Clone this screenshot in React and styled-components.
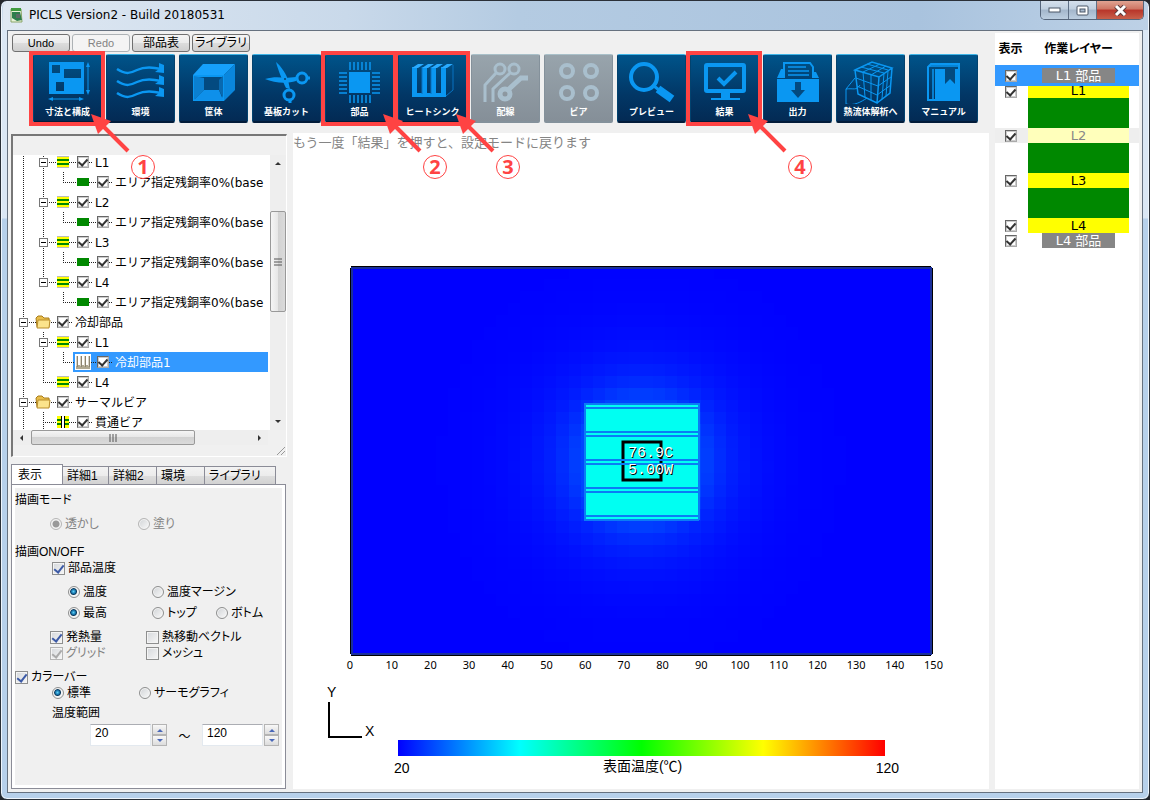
import React from 'react';
import styled, { createGlobalStyle, css } from 'styled-components';

const FRAME = '#b7d0ea';
const FACE = '#f0f0f0';
const RED = '#ff4343';
const SELECT = '#3399ff';
const BOARD_GREEN = '#008800';
const YELLOW = '#ffff00';

const UI_FONT = '"DejaVu Sans", "Noto Sans CJK JP", sans-serif';
const GOTHIC = '"Liberation Sans", "Noto Sans CJK JP", sans-serif';

const GlobalStyle = createGlobalStyle`
  * {
    box-sizing: border-box;
  }

  body {
    margin: 0;
    background: #23262b;
    color: #000;
    font-family: ${UI_FONT};
    font-size: 12px;
  }

  button, input {
    margin: 0;
    padding: 0;
    font-family: inherit;
    font-size: inherit;
  }
`;

/* ---------- window frame ---------- */

const Window = styled.div`
  display: flex;
  flex-direction: column;
  min-height: 100vh;
  padding: 0 6px 6px;
  border: 1px solid #2b3038;
  border-radius: 7px;
  background: linear-gradient(#c3d5e8 0, #dbe7f4 30px, #dbe7f4 217px, ${FRAME} 218px);
  box-shadow: inset 0 0 0 1px #eef5fc;
`;

const TitleBar = styled.header`
  display: flex;
  justify-content: space-between;
  height: 29px;
  margin: 0 -5px 0 -4px;
  padding: 0 4px 0 7px;
  border-radius: 6px 6px 0 0;
  background: linear-gradient(90deg, #dfe8f2, #c9d9ea 30%, #b4cbe2 45%, #a9c3de 80%, #bdd1e6);
`;

const Title = styled.h1`
  display: flex;
  align-items: center;
  gap: 6px;
  margin: 0;
  padding-bottom: 2px;
  font-size: 12px;
  font-weight: 400;
  line-height: 16px;
`;

const WindowButtons = styled.div`
  display: flex;
  height: 19px;
  border: 1px solid #55657a;
  border-top: 0;
  border-radius: 0 0 5px 5px;
  overflow: hidden;
`;

const WindowButton = styled.button`
  display: flex;
  align-items: center;
  justify-content: center;
  width: ${({ $close }) => ($close ? 46 : 28)}px;
  border: 0;
  border-right: ${({ $close }) => ($close ? 0 : '1px solid #5f7086')};
  background: ${({ $close }) =>
    $close
      ? 'linear-gradient(#e0a392, #cd7563 45%, #b8352a 50%, #c8604a)'
      : 'linear-gradient(#d5e0ec, #c0cfdf 45%, #a3b6cb 50%, #bccee0)'};
`;

const Client = styled.div`
  display: flex;
  flex: 1;
  gap: 6px;
  padding: 2px 3px 3px 0;
  border: 1px solid #66717f;
  background: ${FACE};
`;

const Main = styled.main`
  display: flex;
  flex: 1;
  flex-direction: column;
  min-width: 0;
`;

/* ---------- toolbar ---------- */

const MenuRow = styled.div`
  display: flex;
  gap: 2px;
  padding: 1px 4px 2px;
`;

const MenuButton = styled.button`
  width: 58px;
  height: 18px;
  border: 1px solid #707070;
  border-radius: 3px;
  background: linear-gradient(#f4f4f4, #ebebeb 50%, #dddddd 50%, #cfcfcf);
  font-family: ${GOTHIC};
  font-size: ${({ $latin }) => ($latin ? 11 : 12)}px;
  font-feature-settings: 'palt';
  line-height: 16px;
  white-space: nowrap;

  &:disabled {
    border-color: #adb2b5;
    background: #f4f4f4;
    color: #838383;
  }
`;

const IconBar = styled.nav`
  display: flex;
  gap: 4px;
  padding: 0 0 10px 25px;
`;

const TileWrap = styled.div`
  position: relative;
`;

const Tile = styled.button`
  display: block;
  width: 69px;
  height: 69px;
  border: 1px solid #02426e;
  border-top-color: #3fb4e6;
  border-bottom: 2px solid #021c3a;
  border-radius: 2px;
  background: linear-gradient(#00548a, #023766 60%, #032a54);
  color: #fff;

  svg {
    display: block;
    width: 67px;
    height: 48px;
  }

  &:disabled {
    border-color: #84919b;
    border-top-color: #a9c0c9;
    background: linear-gradient(#98a4ac, #858f98);
  }
`;

const TileLabel = styled.span`
  display: block;
  font-family: "Noto Sans CJK JP", sans-serif;
  font-size: 9px;
  font-weight: 700;
  line-height: 16px;
  white-space: nowrap;
`;

const Highlight = styled.div`
  position: absolute;
  inset: -3px -3px -3px -4px;
  border: 4px solid ${RED};
  pointer-events: none;
`;

const Callout = styled.div`
  position: absolute;
  z-index: 2;
  top: 59px;
  left: 57px;
  pointer-events: none;

  svg {
    display: block;
  }
`;

const CalloutNumber = styled.span`
  position: absolute;
  top: 42px;
  left: 41px;
  width: 24px;
  height: 24px;
  border: 1px solid ${RED};
  border-radius: 50%;
  color: ${RED};
  font-family: "Noto Sans", sans-serif;
  font-size: 20px;
  font-weight: 700;
  line-height: 22px;
  text-align: center;
`;

const svgBlue = '#0a97f2';
const svgGray = '#a9bfcd';

const icons = {
  size: (
    <>
      <path fillRule="evenodd" d="M16 7h35v32H16zM19 10v8h8v-8zM31 14v9h17v-9zM23 27v9h8v-9z" fill={svgBlue} />
      <path d="M55 11v25M19 44h29" stroke={svgBlue} strokeWidth="1" />
      <path d="M55 7l2 5h-4zM55 40l2-5h-4zM15 44l5-2v4zM51 44l-5-2v4z" fill={svgBlue} />
    </>
  ),
  wind: [0, 12, 24].map(dy => (
    <g key={dy} transform={`translate(0 ${dy})`}>
      <path d="M11 14c9 6 14 4 20 1s12-4 24-1" fill="none" stroke={svgBlue} strokeWidth="2.500" />
      <path d="M53 8l5 2v8l-9-1 4-3z" fill={svgBlue} />
    </g>
  )),
  box: (
    <>
      <path d="M14 20L24 9h32l-11 11z" fill="#16a0fb" />
      <path d="M45 20L56 9v26L45 46z" fill="#0a86dc" />
      <path d="M15 21h29v24H15z" fill="#034a80" stroke={svgBlue} strokeWidth="2" />
      <path d="M15 21l10 2v12L15 45z" fill="#0b7fd0" />
      <path d="M15 45l10-10h15l4 10z" fill="#0e90ea" />
      <path d="M44 21l-4 4v10l4 8z" fill="#0869b0" />
    </>
  ),
  scissors: (
    <>
      <path d="M24 7c5 4 11 13 12 18l2 9-4-1c-3-6-8-18-10-26z" fill={svgBlue} />
      <path d="M13 24c7-2 14-2 20-1l11-1v4c-9 3-22 2-31-2z" fill={svgBlue} />
      <circle cx="50" cy="23" r="5" fill="none" stroke={svgBlue} strokeWidth="3" />
      <circle cx="37" cy="40" r="5" fill="none" stroke={svgBlue} strokeWidth="3" />
      <path d="M54 23h4M38 45v3" stroke={svgBlue} strokeWidth="3" />
      <circle cx="33" cy="24" r="1" fill="#023e6c" />
    </>
  ),
  chip: (
    <>
      <path d="M24 17h21v21H24z" fill={svgBlue} />
      <path
        d="M25 7v8M29 7v8M33 7v8M37 7v8M41 7v8M45 7v8M25 40v8M29 40v8M33 40v8M37 40v8M41 40v8M45 40v8M14 18h8M14 22h8M14 26h8M14 30h8M14 34h8M14 38h8M47 18h8M47 22h8M47 26h8M47 30h8M47 34h8M47 38h8"
        stroke={svgBlue}
        strokeWidth="1.500"
      />
    </>
  ),
  sink: (
    <>
      <path d="M14 38h34v4H14z" fill={svgBlue} />
      {[14, 24, 33, 43].map(x => (
        <g key={x}>
          <path d={`M${x} 12h5v28h-5z`} fill={svgBlue} />
          <path d={`M${x} 13l6-4h6l-6 4z`} fill="#2aabff" />
        </g>
      ))}
      {[24, 33].map(x => (
        <path key={x} d={`M${x} 12v27`} stroke="#0873c2" />
      ))}
      <path d="M48 41l7-6V10" fill="none" stroke="#0873c2" />
    </>
  ),
  wiring: (
    <g fill="none" stroke={svgGray} strokeWidth="3">
      <circle cx="29" cy="14" r="5" />
      <circle cx="43" cy="14" r="5" />
      <path d="M25 18L14 30v17M39 18L22 34v13" />
      <circle cx="34" cy="39" r="5" strokeWidth="5" />
      <path d="M38 34l12-11h7" strokeWidth="5" />
    </g>
  ),
  via: (
    <g fill="none" stroke={svgGray} strokeWidth="4">
      <circle cx="23" cy="16" r="6" />
      <circle cx="47" cy="16" r="6" />
      <circle cx="23" cy="38" r="6" />
      <circle cx="47" cy="38" r="6" />
    </g>
  ),
  preview: (
    <g fill="none" stroke={svgBlue}>
      <circle cx="27" cy="22" r="13" strokeWidth="4" />
      <path d="M37 31l5 4" strokeWidth="3" />
      <path d="M41 34l14 10" strokeWidth="8" />
    </g>
  ),
  result: (
    <>
      <rect x="16" y="10" width="38" height="26" rx="1" fill="none" stroke={svgBlue} strokeWidth="4" />
      <path d="M28 23l6 6 12-12" fill="none" stroke={svgBlue} strokeWidth="4" />
      <path d="M31 37h9v6h10v2H21v-2h10z" fill={svgBlue} />
    </>
  ),
  output: (
    <>
      <path d="M14 24h42v23H14z" fill={svgBlue} />
      <path d="M14 23l4-9h3v9zM56 23l-3-6h-2v6z" fill={svgBlue} />
      <path d="M21 23V8h26l3 4v11" fill="none" stroke={svgBlue} strokeWidth="2" />
      <path d="M25 12h18M25 16h21M25 20h21" stroke={svgBlue} strokeWidth="1.500" />
      <path d="M32 27h6v8h4l-7 8-7-8h4z" fill="#034a80" />
    </>
  ),
  cube: (
    <g fill="none" stroke={svgBlue}>
      <path d="M19 15L36 7l20 6-13 9zM19 15l3 24 19 9 2-26M56 13l-2 25-13 10" strokeWidth="1.500" />
      <path d="M27 17l17-8M35 20l15-9M25 12l23 6M31 9l21 6M20 23l22 8 13-9M21 31l20 9 14-10M27 17l2 25M35 20v25M48 18l-2 26M52 16l-2 25" />
      <path d="M19 23L10 34v15c8 2 15-2 21-6M10 34c8-1 10 2 14-4" strokeWidth="1" />
    </g>
  ),
  manual: (
    <>
      <path d="M19 12l3-3h28v36H19z" fill="none" stroke={svgBlue} strokeWidth="2" />
      <path d="M20 11h30M24 14v31" stroke={svgBlue} strokeWidth="1.500" />
      <path d="M26 14h24v31H26z" fill={svgBlue} />
      <path d="M36 13h10v16l-5-5-5 5z" fill="#034a80" />
    </>
  ),
};

const tiles = [
  { icon: 'size', label: '寸法と構成', step: 1 },
  { icon: 'wind', label: '環境' },
  { icon: 'box', label: '筐体' },
  { icon: 'scissors', label: '基板カット' },
  { icon: 'chip', label: '部品', step: 2 },
  { icon: 'sink', label: 'ヒートシンク', step: 3 },
  { icon: 'wiring', label: '配線', disabled: true },
  { icon: 'via', label: 'ビア', disabled: true },
  { icon: 'preview', label: 'プレビュー' },
  { icon: 'result', label: '結果', step: 4 },
  { icon: 'output', label: '出力' },
  { icon: 'cube', label: '熱流体解析へ' },
  { icon: 'manual', label: 'マニュアル' },
];

const ToolTile = ({ icon, label, step, disabled }) => (
  <TileWrap>
    <Tile disabled={disabled}>
      <svg viewBox="1 1 67 48" aria-hidden="true">
        {icons[icon]}
      </svg>
      <TileLabel>{label}</TileLabel>
    </Tile>
    {step && (
      <>
        <Highlight />
        <Callout>
          <svg width="42" height="42" aria-hidden="true">
            <path d="M14 14l24 24" stroke={RED} strokeWidth="4" />
            <path d="M1 1l20 7L8 21z" fill={RED} />
          </svg>
          <CalloutNumber>{step}</CalloutNumber>
        </Callout>
      </>
    )}
  </TileWrap>
);

/* ---------- tree ---------- */

const Body = styled.div`
  display: flex;
  flex: 1;
  gap: 6px;
  padding-left: 3px;
`;

const SideBar = styled.aside`
  display: flex;
  flex: 0 0 276px;
  flex-direction: column;
  min-width: 0;
`;

const TreePanel = styled.section`
  margin-top: 1px;
  border: solid #777;
  border-width: 2px 1px 1px 2px;
  border-right-color: #fff;
  border-bottom-color: #fff;
`;

const TreeHeader = styled.div`
  height: 19px;
`;

const TreeView = styled.div`
  display: grid;
  grid-template-columns: minmax(0, 1fr) 16px;
  grid-template-rows: 275px 15px;
`;

const TreeList = styled.ul`
  margin: 0;
  padding: 0 2px 0 0;
  overflow: hidden;
  background: #fff;
  list-style: none;

  li:first-child {
    margin-top: -3px;
  }
`;

const TreeRow = styled.li`
  display: flex;
  height: 20px;
`;

const dotsV = 'repeating-linear-gradient(#222 0 1px, transparent 1px 2px)';
const dotsH = 'repeating-linear-gradient(90deg, #222 0 1px, transparent 1px 2px)';

const guides = {
  blank: 'none',
  line: `${dotsV} 10px 0 / 1px 100% no-repeat`,
  elbow: `${dotsV} 10px 0 / 1px 50% no-repeat, ${dotsH} 100% 10px / 10px 1px no-repeat`,
  tee: `${dotsV} 10px 0 / 1px 100% no-repeat, ${dotsH} 100% 10px / 10px 1px no-repeat`,
  through: `${dotsH} 0 10px / 100% 1px no-repeat`,
};

const Cell = styled.span`
  display: flex;
  flex: 0 0 20px;
  align-items: center;
  justify-content: center;
  height: 20px;
  background: ${({ $guide }) => guides[$guide]};
`;

const Expander = styled.button`
  width: 9px;
  height: 9px;
  border: 1px solid #777;
  background: linear-gradient(#000, #000) center / 5px 1px no-repeat #fff;
`;

const TreeLabel = styled.label`
  display: flex;
  flex: 1;
  min-width: 0;
  line-height: 20px;
  white-space: nowrap;
  ${({ $selected }) =>
    $selected &&
    css`
      background: ${SELECT};
      color: #fff;
    `}
`;

const TreeText = styled.span`
  padding: 1px 0 0 2px;
`;

const TreeCheck = styled.input.attrs({ type: 'checkbox' })`
  display: grid;
  place-items: center;
  width: 12px;
  height: 12px;
  border: 1px solid #aaa;
  border-top-color: #666;
  border-left-color: #666;
  background: #fff;
  box-shadow: inset 0 0 0 1px #ccc;
  appearance: none;

  &:checked::before {
    width: 4px;
    height: 7px;
    margin-bottom: 3px;
    border: solid #333;
    border-width: 0 2px 2px 0;
    content: '';
    transform: rotate(42deg);
  }
`;

const nodeIcons = {
  folder: (
    <svg width="16" height="14" aria-hidden="true">
      <path d="M1 3l2-2h4l2 2h5v9H2z" fill="#e8bd4a" stroke="#a87d1c" />
      <path d="M3 5h12l-1 8H2z" fill="#fbe38c" stroke="#b98c2a" />
    </svg>
  ),
  layer: (
    <svg width="12" height="12" aria-hidden="true">
      <path d="M0 0h12v12H0z" fill={YELLOW} />
      <path d="M0 3h12v2H0zM0 7h12v2H0z" fill={BOARD_GREEN} />
      <path d="M0 0h12v1H0zM0 11h12v1H0z" fill="#bbb" />
    </svg>
  ),
  area: (
    <svg width="12" height="8" aria-hidden="true">
      <path d="M0 0h12v8H0z" fill={BOARD_GREEN} />
    </svg>
  ),
  fins: (
    <svg width="16" height="16" aria-hidden="true">
      <path d="M0 0h16v16H0z" fill="#fff" />
      <path d="M1 11h14v4H1z" fill="#b0a891" />
      <path d="M2.500 2v11M6.500 2v11M10.500 2v11M14.500 2v11" stroke="#8a8270" />
      <path d="M1.500 2v10M5.500 2v10M9.500 2v10M13.500 2v10" stroke="#d8d2c2" />
    </svg>
  ),
  through: (
    <svg width="12" height="12" aria-hidden="true">
      <path d="M0 0h12v12H0z" fill={YELLOW} />
      <path d="M0 3h12v2H0zM0 7h12v2H0z" fill={BOARD_GREEN} />
      <path d="M4 0h4v12H4z" fill="#fff" />
      <path d="M4.500 0v12M7.500 0v12" stroke="#000" />
    </svg>
  ),
};

const AREA = 'エリア指定残銅率0%(base';

const treeRows = [
  { guides: ['line', 'tee'], open: true, icon: 'layer', text: 'L1' },
  { guides: ['line', 'line', 'elbow'], icon: 'area', text: AREA },
  { guides: ['line', 'tee'], open: true, icon: 'layer', text: 'L2' },
  { guides: ['line', 'line', 'elbow'], icon: 'area', text: AREA },
  { guides: ['line', 'tee'], open: true, icon: 'layer', text: 'L3' },
  { guides: ['line', 'line', 'elbow'], icon: 'area', text: AREA },
  { guides: ['line', 'elbow'], open: true, icon: 'layer', text: 'L4' },
  { guides: ['line', 'blank', 'elbow'], icon: 'area', text: AREA },
  { guides: ['tee'], open: true, icon: 'folder', text: '冷却部品' },
  { guides: ['line', 'tee'], open: true, icon: 'layer', text: 'L1' },
  { guides: ['line', 'line', 'elbow'], icon: 'fins', text: '冷却部品1', selected: true },
  { guides: ['line', 'elbow'], icon: 'layer', text: 'L4' },
  { guides: ['tee'], open: true, icon: 'folder', text: 'サーマルビア' },
  { guides: ['line', 'tee'], icon: 'through', text: '貫通ビア' },
];

const ScrollBar = styled.div`
  display: grid;
  background: #eee;
  ${({ $horizontal }) =>
    $horizontal
      ? css`
          grid-template-columns: 16px 2fr 164fr 57fr 16px;
          margin-right: 2px;
        `
      : css`
          grid-template-rows: 16px 40fr 101fr 102fr 16px;
        `}
`;

const ScrollArrow = styled.button`
  display: grid;
  place-items: center;
  border: 0;
  background: none;
`;

const Thumb = styled.div`
  display: grid;
  place-items: center;
  border: 1px solid #999;
  border-radius: 2px;
  background: linear-gradient(
    ${({ $horizontal }) => ($horizontal ? '180deg' : '90deg')},
    #f5f5f5,
    #e6e6e6 50%,
    #d2d2d2 50%,
    #dadada
  );
`;

const arrowPaths = {
  up: 'M0 5l3-3 3 3z',
  down: 'M0 1l3 3 3-3z',
  left: 'M5 0L2 3l3 3z',
  right: 'M1 0l3 3-3 3z',
};

const Arrow = ({ to, fill = '#333' }) => (
  <svg width="6" height="6" aria-hidden="true">
    <path d={arrowPaths[to]} fill={fill} />
  </svg>
);

const Scroll = ({ horizontal }) => (
  <ScrollBar $horizontal={horizontal}>
    <ScrollArrow aria-label={horizontal ? '左へ' : '上へ'}>
      <Arrow to={horizontal ? 'left' : 'up'} />
    </ScrollArrow>
    <span />
    <Thumb $horizontal={horizontal}>
      <svg width="8" height="8" aria-hidden="true">
        <path d={horizontal ? 'M1 0v8M4 0v8M7 0v8' : 'M0 1h8M0 4h8M0 7h8'} stroke="#555" />
      </svg>
    </Thumb>
    <span />
    <ScrollArrow aria-label={horizontal ? '右へ' : '下へ'}>
      <Arrow to={horizontal ? 'right' : 'down'} />
    </ScrollArrow>
  </ScrollBar>
);

const TreeFooter = styled.div`
  display: flex;
  justify-content: flex-end;
  height: 11px;
`;

const Tree = () => (
  <TreePanel>
    <TreeHeader />
    <TreeView>
      <TreeList>
        {treeRows.map((row, i) => (
          <TreeRow key={i}>
            {row.guides.map((guide, depth) => (
              <Cell key={depth} $guide={guide}>
                {row.open && depth === row.guides.length - 1 && <Expander aria-label="折りたたむ" />}
              </Cell>
            ))}
            <TreeLabel $selected={row.selected}>
              <Cell $guide="through">{nodeIcons[row.icon]}</Cell>
              <Cell $guide="through">
                <TreeCheck defaultChecked />
              </Cell>
              <TreeText>{row.text}</TreeText>
            </TreeLabel>
          </TreeRow>
        ))}
      </TreeList>
      <Scroll />
      <Scroll horizontal />
    </TreeView>
    <TreeFooter>
      <svg width="10" height="11" aria-hidden="true">
        <path d="M1 10l8-8M5 10l4-4" stroke="#999" />
      </svg>
    </TreeFooter>
  </TreePanel>
);

/* ---------- settings tabs ---------- */

const Tabs = styled.div`
  display: flex;
  align-items: flex-end;
  height: 20px;
  margin: 7px 11px 0 0;
`;

const Tab = styled.button`
  flex: 0 1 ${({ $size }) => $size}px;
  height: 18px;
  padding: 0 4px;
  border: 1px solid #8b8c97;
  border-bottom: 0;
  border-left-width: ${({ $next }) => ($next ? 0 : 1)}px;
  background: linear-gradient(#f3f3f3, #ececec 50%, #dedede 50%, #d2d2d2);
  font-family: ${GOTHIC};
  font-feature-settings: 'palt';
  line-height: 18px;
  text-align: left;
  white-space: nowrap;

  ${({ $active }) =>
    $active &&
    css`
      height: 21px;
      margin-bottom: -1px;
      padding-left: 6px;
      background: #fff;
      line-height: 16px;
    `}
`;

const TabPanel = styled.div`
  flex: 1;
  margin-right: 1px;
  border: 1px solid #8b8c97;
  box-shadow: inset 0 0 0 3px #fff;
  font-family: ${GOTHIC};
  font-feature-settings: 'palt';
`;

const Line = styled.div`
  display: flex;
  align-items: center;
  height: ${({ $height }) => $height || 16}px;
  margin-top: ${({ $gap }) => $gap || 0}px;
  padding-left: ${({ $indent }) => $indent || 3}px;
`;

const Option = styled.label`
  display: flex;
  flex: 0 0 ${({ $width }) => ($width ? `${$width}px` : 'auto')};
  align-items: center;
  gap: 3px;
  color: ${({ $disabled }) => ($disabled ? '#838383' : '#000')};
  line-height: 16px;
  white-space: nowrap;
`;

const CheckBox = styled.input.attrs({ type: 'checkbox' })`
  display: grid;
  place-items: center;
  width: 13px;
  height: 13px;
  border: 1px solid #8e8f8f;
  background: linear-gradient(135deg, #d5d8dc, #f6f6f6);
  box-shadow: inset 0 0 0 1px #f4f4f4;
  appearance: none;

  &:checked::before {
    width: 4px;
    height: 8px;
    margin-bottom: 3px;
    border: solid #3c5aa6;
    border-width: 0 2px 2px 0;
    content: '';
    transform: rotate(38deg);
  }

  &:disabled {
    border-color: #b5b5b5;
  }

  &:disabled::before {
    border-color: #aaa;
  }
`;

const Radio = styled.input.attrs({ type: 'radio' })`
  width: 12px;
  height: 12px;
  border: 1px solid #8e8f8f;
  border-radius: 50%;
  background: linear-gradient(135deg, #d0d3d6, #fafafa);
  box-shadow: inset 0 0 0 1px #f4f4f4;
  appearance: none;

  &:checked {
    background: radial-gradient(circle at 45% 45%, #5fd0f5 0, #1878b0 2px, #0c3a5c 3px, #f4f4f4 4px);
  }

  &:disabled {
    border-color: #b5b5b5;
  }

  &:checked:disabled {
    background: radial-gradient(circle, #999 0 3px, #f0f0f0 4px);
  }
`;

const Check = ({ label, width, ...rest }) => (
  <Option $width={width} $disabled={rest.disabled}>
    <CheckBox {...rest} />
    {label}
  </Option>
);

const Choice = ({ label, width, ...rest }) => (
  <Option $width={width} $disabled={rest.disabled}>
    <Radio {...rest} />
    {label}
  </Option>
);

const Spinner = styled.span`
  display: flex;
  gap: 1px;
  height: 22px;
`;

const NumberBox = styled.input`
  width: 61px;
  padding: 0 0 4px 4px;
  border: 1px solid #e3e9ef;
  border-top-color: #abadb3;
  background: #fff;
`;

const SpinButtons = styled.span`
  display: flex;
  flex-direction: column;
`;

const SpinButton = styled.button`
  display: grid;
  place-items: center;
  width: 15px;
  height: 11px;
  border: 1px solid #b4b4b4;
  background: linear-gradient(#f8f8f8, #dcdcdc);
`;

const Tilde = styled.span`
  width: 35px;
  text-align: center;
`;

const Range = ({ label, value }) => (
  <Spinner>
    <NumberBox aria-label={label} defaultValue={value} />
    <SpinButtons>
      <SpinButton aria-label={`${label}を上げる`}>
        <Arrow to="up" fill="#4a68b8" />
      </SpinButton>
      <SpinButton aria-label={`${label}を下げる`}>
        <Arrow to="down" fill="#4a68b8" />
      </SpinButton>
    </SpinButtons>
  </Spinner>
);

const Settings = () => (
  <>
    <Tabs role="tablist">
      <Tab role="tab" aria-selected="true" $size={52} $active>表示</Tab>
      <Tab role="tab" $size={46} $next>詳細1</Tab>
      <Tab role="tab" $size={48} $next>詳細2</Tab>
      <Tab role="tab" $size={48} $next>環境</Tab>
      <Tab role="tab" $size={71} $next>ライブラリ</Tab>
    </Tabs>
    <TabPanel role="tabpanel">
      <Line $height={20} $gap={3}>描画モード</Line>
      <Line $height={32} $indent={38}>
        <Choice name="mode" label="透かし" width={88} defaultChecked disabled />
        <Choice name="mode" label="塗り" disabled />
      </Line>
      <Line $height={20}>描画ON/OFF</Line>
      <Line $indent={40}>
        <Check label="部品温度" defaultChecked />
      </Line>
      <Line $gap={8} $indent={56}>
        <Choice name="value" label="温度" width={84} defaultChecked />
        <Choice name="value" label="温度マージン" />
      </Line>
      <Line $gap={5} $indent={56}>
        <Choice name="side" label="最高" width={84} defaultChecked />
        <Choice name="side" label="トップ" width={64} />
        <Choice name="side" label="ボトム" />
      </Line>
      <Line $indent={38} $gap={8}>
        <Check label="発熱量" width={96} defaultChecked />
        <Check label="熱移動ベクトル" />
      </Line>
      <Line $indent={38}>
        <Check label="グリッド" width={96} defaultChecked disabled />
        <Check label="メッシュ" />
      </Line>
      <Line $gap={8}>
        <Check label="カラーバー" defaultChecked />
      </Line>
      <Line $indent={40}>
        <Choice name="palette" label="標準" width={87} defaultChecked />
        <Choice name="palette" label="サーモグラフィ" />
      </Line>
      <Line $height={20} $indent={40}>温度範囲</Line>
      <Line $height={22} $gap={3} $indent={78}>
        <Range label="最低温度" value="20" />
        <Tilde>～</Tilde>
        <Range label="最高温度" value="120" />
      </Line>
    </TabPanel>
  </>
);

/* ---------- result view ---------- */

const Canvas = styled.section`
  flex: 1;
  min-width: 0;
  background: #fff;
`;

const Message = styled.p`
  margin: 0;
  padding-bottom: 2px;
  color: #858585;
  font-family: "Noto Sans CJK JP", sans-serif;
  font-size: 13px;
  line-height: 17px;
`;

const Plot = styled.svg`
  display: block;
  width: 100%;
  height: auto;
  font-family: "Noto Sans", sans-serif;
  font-size: 11px;
`;

const Legend = styled.div`
  font-family: ${GOTHIC};
`;

const ColorBar = styled.div`
  height: 16px;
  margin: 0 104px 0 105px;
  background: linear-gradient(90deg, #00f, #0ff 25%, #0f0 50%, #ff0 75%, #f00);
`;

const LegendText = styled.div`
  display: flex;
  justify-content: space-between;
  padding: 0 90px 0 101px;
  font-size: 14px;
  line-height: 24px;
`;

const LegendCaption = styled.span`
  line-height: 20px;
`;

const COLS = 48;
const ROWS = 32;
const board = { x: 58, y: 115, w: 580, h: 387 };
const source = { x: 348, y: 309 };

// surface temperature falls off with the distance from the heat sink
const heatCells = [];
for (let r = 0; r < ROWS; r++) {
  for (let c = 0; c < COLS; c++) {
    const w = board.w / COLS;
    const h = board.h / ROWS;
    const x = board.x + c * w;
    const y = board.y + r * h;
    const d = Math.hypot(x + w / 2 - source.x, y + h / 2 - source.y);
    const green = Math.round(70 * Math.exp(-Math.max(0, d - 62) / 36));
    if (green > 1) heatCells.push({ x, y, w, h, green });
  }
}

const ticks = Array.from({ length: 15 }, (_, i) => (i + 1) * 10);
const finLines = [271, 275, 299, 303, 327, 331, 355, 359, 383, 387];

const ResultPlot = () => (
  <Plot viewBox="0 0 696 588" role="img" aria-label="表面温度の分布">
    <rect x={board.x} y={board.y} width={board.w} height={board.h} fill="#00f" />
    <g shapeRendering="crispEdges">
      {heatCells.map(cell => (
        <rect
          key={`${cell.x}-${cell.y}`}
          x={cell.x}
          y={cell.y}
          width={cell.w}
          height={cell.h}
          fill={`rgb(0, ${cell.green}, 255)`}
        />
      ))}
    </g>
    <rect x="59" y="116" width="579" height="386" fill="none" stroke="#1a2f9a" strokeWidth="2" />
    <path d="M58 114.500h580M58 503.500h580M57.500 116v386M639.500 116v386" stroke="#000" />
    <rect x="291" y="251" width="115" height="116" fill="#00fff2" />
    <rect x="330" y="290" width="38" height="38" fill="none" stroke="#000" strokeWidth="3" />
    <g stroke="#0a7cf5" strokeWidth="2">
      {finLines.map(y => (
        <path key={y} d={`M291 ${y - 19}h115`} />
      ))}
      <path d="M292 251v117M406 251v117" />
    </g>
    <g fontFamily="'Liberation Mono', monospace" fontSize="15" fill="#000">
      <text x="336" y="306">76.9C</text>
      <text x="336" y="323">5.00W</text>
    </g>
    <g fontFamily="'Liberation Mono', monospace" fontSize="15" fill="#fff">
      <text x="335" y="305">76.9C</text>
      <text x="335" y="322">5.00W</text>
    </g>
    <g textAnchor="middle">
      <text x="57" y="517">0</text>
      {ticks.map(t => (
        <text key={t} x={60 + t * 3.87} y="517">
          {t}
        </text>
      ))}
    </g>
    <path d="M36 550v35h33" fill="none" stroke="#000" strokeWidth="2" />
    <g fontFamily="'Liberation Sans', sans-serif" fontSize="14">
      <text x="34" y="545">Y</text>
      <text x="72" y="584">X</text>
    </g>
  </Plot>
);

/* ---------- layer list ---------- */

const LayerPanel = styled.aside`
  flex: 0 0 144px;
  background: #fff;
`;

const LayerTable = styled.table`
  width: 100%;
  border-collapse: collapse;
  font-size: 13px;
  line-height: 15px;
  text-align: center;

  th {
    height: 32px;
    padding: 0;
    font-family: ${GOTHIC};
    font-size: 12px;
    font-feature-settings: 'palt';
  }

  th:first-child {
    width: 33px;
    padding-right: 2px;
  }

  td {
    padding: 0;
  }
`;

const rowColors = { selected: SELECT, muted: '#eeeeee' };

const LayerRow = styled.tr`
  height: ${({ $height }) => $height}px;
  background: ${({ $state }) => rowColors[$state] || 'none'};
`;

const LayerCell = styled.td`
  && {
    padding-right: ${({ $swatch }) => ($swatch ? 10 : 2)}px;
  }

  input {
    margin: 0 auto;
  }
`;

const Copper = styled.div`
  display: flex;
  align-items: flex-end;
  justify-content: center;
  height: ${({ $height }) => $height}px;
  overflow: hidden;
  background: ${({ $muted }) => ($muted ? '#ffffbb' : YELLOW)};
  color: ${({ $muted }) => ($muted ? '#888' : '#000')};
`;

const Core = styled.div`
  height: 30px;
  background: ${BOARD_GREEN};
`;

const Parts = styled.div`
  height: 15px;
  margin: 0 14px;
  background: #868686;
  color: #fff;
`;

const layers = [
  { name: 'L1 部品', kind: 'parts', height: 21, state: 'selected' },
  { name: 'L1', kind: 'copper', height: 12 },
  { kind: 'core', height: 30 },
  { name: 'L2', kind: 'copper', height: 15, state: 'muted' },
  { kind: 'core', height: 30 },
  { name: 'L3', kind: 'copper', height: 15 },
  { kind: 'core', height: 30 },
  { name: 'L4', kind: 'copper', height: 15 },
  { name: 'L4 部品', kind: 'parts', height: 15 },
];

const Layers = () => (
  <LayerPanel>
    <LayerTable>
      <thead>
        <tr>
          <th>表示</th>
          <LayerCell as="th" $swatch>作業レイヤー</LayerCell>
        </tr>
      </thead>
      <tbody>
        {layers.map(({ name, kind, height, state }, i) => (
          <LayerRow key={i} $height={height} $state={state}>
            <LayerCell>{name && <TreeCheck defaultChecked aria-label={name} />}</LayerCell>
            <LayerCell $swatch>
              {kind === 'parts' && <Parts>{name}</Parts>}
              {kind === 'copper' && (
                <Copper $height={height} $muted={state === 'muted'}>
                  {name}
                </Copper>
              )}
              {kind === 'core' && <Core />}
            </LayerCell>
          </LayerRow>
        ))}
      </tbody>
    </LayerTable>
  </LayerPanel>
);

const App = () => (
  <>
    <GlobalStyle />
    <Window>
      <TitleBar>
        <Title>
          <svg width="13" height="16" aria-hidden="true">
            <path d="M1 2h10l1 13H1z" fill="#e9f3d8" stroke="#8aa66a" />
            <path d="M1 1h10v3H1z" fill="#3f9a3f" />
            <path d="M2 5h8l2 8-5 1-5-3z" fill="#2f7d4c" />
            <path d="M6 7h4v4H6z" fill="#5c6b66" />
          </svg>
          PICLS Version2 - Build 20180531
        </Title>
        <WindowButtons>
          <WindowButton aria-label="最小化">
            <svg width="13" height="6" aria-hidden="true">
              <rect x="1" y="1" width="11" height="4" fill="#fff" stroke="#4a5666" />
            </svg>
          </WindowButton>
          <WindowButton aria-label="最大化">
            <svg width="13" height="11" aria-hidden="true">
              <rect x="1" y="1" width="11" height="9" rx="1" fill="#fff" stroke="#4a5666" />
              <rect x="4" y="4" width="5" height="3" fill="#a9bace" stroke="#4a5666" />
            </svg>
          </WindowButton>
          <WindowButton $close aria-label="閉じる">
            <svg width="13" height="11" aria-hidden="true">
              <path d="M2 1l9 9M11 1l-9 9" stroke="#5b3a3a" strokeWidth="5" />
              <path d="M2 1l9 9M11 1l-9 9" stroke="#fff" strokeWidth="3" />
            </svg>
          </WindowButton>
        </WindowButtons>
      </TitleBar>
      <Client>
        <Main>
          <MenuRow>
            <MenuButton $latin>Undo</MenuButton>
            <MenuButton $latin disabled>Redo</MenuButton>
            <MenuButton>部品表</MenuButton>
            <MenuButton>ライブラリ</MenuButton>
          </MenuRow>
          <IconBar>
            {tiles.map(tile => (
              <ToolTile key={tile.icon} {...tile} />
            ))}
          </IconBar>
          <Body>
            <SideBar>
              <Tree />
              <Settings />
            </SideBar>
            <Canvas>
              <Message>もう一度「結果」を押すと、設定モードに戻ります</Message>
              <ResultPlot />
              <Legend>
                <ColorBar />
                <LegendText>
                  <span>20</span>
                  <LegendCaption>表面温度(℃)</LegendCaption>
                  <span>120</span>
                </LegendText>
              </Legend>
            </Canvas>
          </Body>
        </Main>
        <Layers />
      </Client>
    </Window>
  </>
);

export default App;
